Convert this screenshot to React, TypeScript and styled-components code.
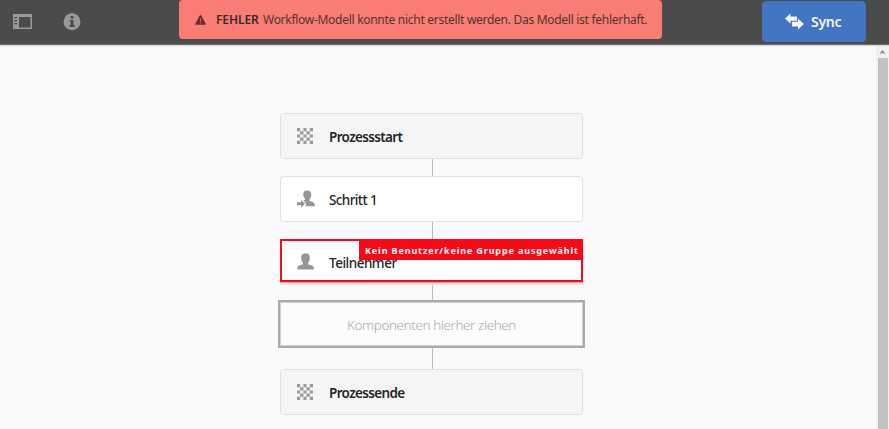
import React from 'react';
import styled, { createGlobalStyle, css } from 'styled-components';

const GlobalStyle = createGlobalStyle`
  * { box-sizing: border-box; }
  body { margin: 0; overflow: hidden; background: #f9f9f9; font-family: "Noto Sans", "Open Sans", sans-serif; }
  svg { display: block; flex: none; }
`;

const Page = styled.div`
  display: flex;
  flex-direction: column;
  width: 889px;
  height: 429px;
`;

const Toolbar = styled.header`
  display: flex;
  align-items: flex-start;
  height: 45px;
  flex: none;
  background: #4b4b4b;
  border-bottom: 1px solid #6b6b6b;
  box-shadow: 0 1px 1px #d6d6d6;
  z-index: 1;
`;

const Tools = styled.div`
  display: flex;
  width: 179px;
  padding: 13px 0 0 13px;
  gap: 31px;
`;

const Toast = styled.div`
  display: flex;
  align-items: center;
  width: 483px;
  height: 39px;
  padding-left: 16px;
  border-radius: 4px;
  background: #fa7d75;
  color: #503432;
`;

const Text = styled.span<{ $size: number; $weight?: number; $spacing?: number }>`
  font-size: ${p => p.$size}px;
  font-weight: ${p => p.$weight ?? 400};
  letter-spacing: ${p => p.$spacing ?? 0}px;
  line-height: 18px;
  white-space: nowrap;
`;

const ToastTitle = styled(Text)`
  width: 47px;
  margin-left: 10px;
  color: #352b2b;
`;

const SyncButton = styled.button`
  display: flex;
  align-items: center;
  gap: 6px;
  width: 104px;
  height: 41px;
  margin: 1px 0 0 100px;
  padding: 0 0 0 22px;
  border: 1px solid #3e72c4;
  border-radius: 4px;
  background: #4475c2;
  color: #f2f5fa;
  font-family: inherit;
`;

const Workspace = styled.main`
  display: flex;
  flex: 1;
  min-height: 0;
`;

const Canvas = styled.section`
  display: flex;
  flex: 1;
  flex-direction: column;
  align-items: center;
  padding: 68px 13px 0 0;
`;

const Flow = styled.div`
  display: flex;
  flex-direction: column;
  align-items: center;
  width: 309px;
`;

const Connector = styled.div<{ $height: number }>`
  width: 1px;
  height: ${p => p.$height}px;
  margin-left: 2px;
  flex: none;
  background: #bcbcbc;
`;

const StepName = styled(Text)`
  padding-top: 2px;
`;

const Step = styled.div<{ $kind?: 'terminal' | 'error' }>`
  position: relative;
  display: flex;
  align-items: center;
  width: 303px;
  height: 46px;
  flex: none;
  padding: 0 0 0 16px;
  border: 1px solid #e1e1e1;
  border-radius: 4px;
  background: ${p => (p.$kind === 'terminal' ? '#f5f5f5' : '#fff')};
  color: #252525;
  ${p => p.$kind === 'error' && css`
    height: 43px;
    margin-bottom: 1px;
    padding: 2px 0 0 15px;
    border: 2px solid #fc0718;
    border-radius: 0;
    box-shadow: 0 1px #fca0a5, 0 3px #e6e6e6;
    ${StepName} { padding-top: 3px; }
  `}
`;

const IconSlot = styled.div`
  width: 32px;
  flex: none;
`;

const ErrorTag = styled.div`
  position: absolute;
  top: 0;
  right: -1px;
  width: 223px;
  height: 19px;
  padding-left: 6px;
  background: #fc0718;
  color: #fff;
  display: flex;
  align-items: center;
`;

const DropZone = styled.div`
  display: flex;
  align-items: center;
  justify-content: center;
  width: 307px;
  height: 48px;
  flex: none;
  padding-top: 2px;
  border: 2px solid #a9a9a9;
  outline: 1px solid #d0d0d0;
  outline-offset: -3px;
  background: #fcfcfc;
  color: #a8a8a8;
`;

const Scrollbar = styled.div`
  display: flex;
  flex-direction: column;
  align-items: center;
  width: 13px;
  padding-top: 4px;
  background: #f1f1f1;
`;

const Thumb = styled.div`
  width: 10px;
  flex: 1;
  margin-top: 4px;
  background: #c1c1c1;
`;

const RailIcon = () => (
  <svg width="19" height="16" viewBox="0 0 19 16">
    <path fill="#999" fillRule="evenodd" d="M0 1h19v15H0zM6 4h11.5v10.5H6zM1.3 4H4v1.2H1.3zM1.3 7H4v1.2H1.3zM1.3 10H4v1.2H1.3z" />
  </svg>
);

const InfoIcon = () => (
  <svg width="18" height="18" viewBox="0 0 18 18">
    <circle cx="9" cy="8.8" r="8.5" fill="#999" />
    <path fill="#4b4b4b" d="M7.5 3h3v2.5h-3zM6.5 7h4v5.3h1.2V14H6.4v-1.7h1.3V8.5H6.5z" />
  </svg>
);

const AlertIcon = () => (
  <svg width="11" height="10" viewBox="0 0 11 10">
    <path fill="#692d2b" d="M5.5 0Q6 0 6.3.6L10.8 9q.2.8-.5.8H.7Q0 9.8.2 9L4.7.6Q5 0 5.5 0z" />
    <path fill="#d96a64" d="M5 3.2h1.1v3.3H5zM5 7.5h1.1v1H5z" />
  </svg>
);

const SyncIcon = () => (
  <svg width="20" height="17" viewBox="0 0 20 17">
    <path fill="#f2f5fa" d="M0 5.5 5.5.4v3H12v4.3H5.5v3zM7 8.8h6v-3l6 5.3-6 5.3v-3H7z" />
  </svg>
);

const CheckerIcon = () => (
  <svg width="16" height="16" viewBox="0 0 5 5">
    <path fill="#999" d="M0 0h1v1H0zM2 0h1v1H2zM4 0h1v1H4zM1 1h1v1H1zM3 1h1v1H3zM0 2h1v1H0zM2 2h1v1H2zM4 2h1v1H4zM1 3h1v1H1zM3 3h1v1H3zM0 4h1v1H0zM2 4h1v1H2zM4 4h1v1H4z" />
  </svg>
);

const UserIcon = () => (
  <svg width="18" height="17" viewBox="0 0 18 17">
    <path fill="#969696" d="M8.5.3c3 0 4.500 1.800 4.300 4.900-.1 2.200-.7 3.400-1.800 4.500v1.500l4.500 1.600c1.100.5 1.300 1.500 1.400 3.700H.3c.1-2.200.3-3.200 1.400-3.700L6 11.200V9.700C4.900 8.600 4.300 7.400 4.200 5.200 4 2.100 5.500.3 8.500.3z" />
  </svg>
);

const AssignIcon = () => (
  <svg width="18" height="18" viewBox="0 0 18 18">
    <path fill="#969696" d="M10.200.4c2.800 0 4.300 1.700 4.100 4.700-.1 2-.8 3.300-1.900 4.300v1.400l3.600 1.500c1.300.6 1.700 1.700 1.900 4H9l-.3-3-2.200-3 2.100-1V9.200C7.200 7.900 6.500 6.800 6.300 5.100 6 2.200 7.300.4 10.200.4zM0 12.200h4.200V9.700L8 13.700l-3.800 4v-2.500H0z" />
  </svg>
);

export default function App() {
  return (
    <>
      <GlobalStyle />
      <Page>
        <Toolbar>
          <Tools><RailIcon /><InfoIcon /></Tools>
          <Toast>
            <AlertIcon />
            <ToastTitle $size={12} $weight={600} $spacing={-0.1}>FEHLER</ToastTitle>
            <Text $size={12} $spacing={-0.285}>Workflow-Modell konnte nicht erstellt werden. Das Modell ist fehlerhaft.</Text>
          </Toast>
          <SyncButton>
            <SyncIcon />
            <Text $size={14} $weight={600} $spacing={-0.3}>Sync</Text>
          </SyncButton>
        </Toolbar>
        <Workspace>
          <Canvas>
            <Flow>
              <Step $kind="terminal">
                <IconSlot><CheckerIcon /></IconSlot>
                <StepName $size={13.5} $weight={600} $spacing={-0.65}>Prozessstart</StepName>
              </Step>
              <Connector $height={17} />
              <Step>
                <IconSlot><AssignIcon /></IconSlot>
                <StepName $size={13.5} $weight={500} $spacing={-0.6}>Schritt 1</StepName>
              </Step>
              <Connector $height={17} />
              <Step $kind="error">
                <IconSlot><UserIcon /></IconSlot>
                <StepName $size={13.5} $weight={500} $spacing={-0.5}>Teilnehmer</StepName>
                <ErrorTag>
                  <Text $size={9} $weight={700} $spacing={0.87}>Kein Benutzer/keine Gruppe ausgewählt</Text>
                </ErrorTag>
              </Step>
              <Connector $height={17} />
              <DropZone>
                <Text $size={13.5} $weight={300} $spacing={-0.42}>Komponenten hierher ziehen</Text>
              </DropZone>
              <Connector $height={21} />
              <Step $kind="terminal">
                <IconSlot><CheckerIcon /></IconSlot>
                <StepName $size={13.5} $weight={600} $spacing={-0.65}>Prozessende</StepName>
              </Step>
            </Flow>
          </Canvas>
          <Scrollbar>
            <svg width="7" height="5" viewBox="0 0 7 5"><path fill="#909090" d="M3.5 1 6.5 4.5h-6z" /></svg>
            <Thumb />
          </Scrollbar>
        </Workspace>
      </Page>
    </>
  );
}
